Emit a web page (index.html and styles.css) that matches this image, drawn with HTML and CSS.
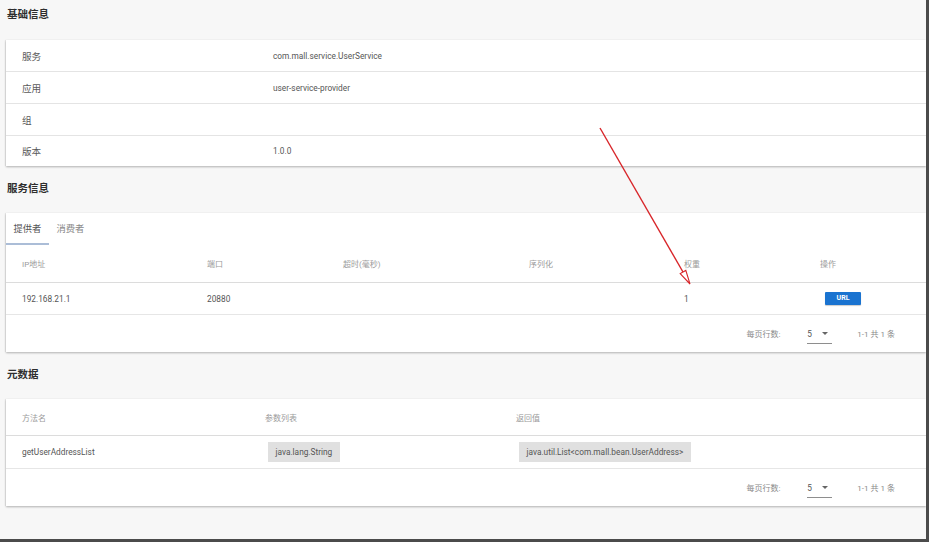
FILE: index.html
```html
<!DOCTYPE html>
<html lang="zh-CN">
<head>
<meta charset="utf-8">
<title>服务详情</title>
<link rel="stylesheet" href="styles.css">
</head>
<body>
<div class="frame">
  <h2 class="title">基础信息</h2>
  <div class="card">
    <div class="kv"><span class="k">服务</span><span class="v">com.mall.service.UserService</span></div>
    <div class="kv"><span class="k">应用</span><span class="v">user-service-provider</span></div>
    <div class="kv"><span class="k">组</span><span class="v"></span></div>
    <div class="kv"><span class="k">版本</span><span class="v">1.0.0</span></div>
  </div>

  <h2 class="title next">服务信息</h2>
  <div class="card">
    <div class="tabs">
      <span class="tab active">提供者</span>
      <span class="tab">消费者</span>
    </div>
    <div class="trow thead g6">
      <span>IP地址</span><span>端口</span><span>超时(毫秒)</span><span>序列化</span><span>权重</span><span>操作</span>
    </div>
    <div class="trow g6">
      <span>192.168.21.1</span><span>20880</span><span></span><span></span><span>1</span><span><span class="btn">URL</span></span>
    </div>
    <div class="pager">
      <span class="plabel">每页行数:</span>
      <span class="select">5<i class="caret"></i></span>
      <span class="pinfo">1-1 共 1 条</span>
    </div>
  </div>

  <h2 class="title next">元数据</h2>
  <div class="card">
    <div class="trow thead short g3">
      <span>方法名</span><span>参数列表</span><span>返回值</span>
    </div>
    <div class="trow tall g3">
      <span>getUserAddressList</span><span><span class="chip">java.lang.String</span></span><span><span class="chip">java.util.List&lt;com.mall.bean.UserAddress&gt;</span></span>
    </div>
    <div class="pager">
      <span class="plabel">每页行数:</span>
      <span class="select">5<i class="caret"></i></span>
      <span class="pinfo">1-1 共 1 条</span>
    </div>
  </div>

  <svg class="arrow" width="926" height="539" viewBox="0 0 926 539">
    <line x1="600" y1="128" x2="683" y2="272" stroke="#d8262a" stroke-width="1.4"/>
    <polygon points="690,284 680.2,273.6 685.8,270.4" fill="#fff" stroke="#d8262a" stroke-width="1.1" stroke-linejoin="miter"/>
  </svg>
</div>
</body>
</html>
```

FILE: styles.css
```css
html, body {
  margin: 0;
  padding: 0;
  background: #ffffff;
}

body {
  font-family: Roboto, "Noto Sans CJK SC", sans-serif;
  color: #555;
}

.frame {
  position: relative;
  width: 926px;
  height: 539px;
  background: #f7f7f7;
  border-right: 3px solid #4b4b4b;
  border-bottom: 3px solid #4b4b4b;
  overflow: hidden;
}

.title {
  margin: 0;
  padding: 8px 7px 18px;
  font-size: 10.5px;
  line-height: 14px;
  font-weight: bold;
  color: #2e2e2e;
}

.title.next {
  padding-top: 10px;
  padding-bottom: 17px;
}

.card {
  margin: 0 0 6px 6px;
  background: #fff;
  box-shadow: 0 1px 2px rgba(0, 0, 0, 0.28), -1px 0 1px rgba(0, 0, 0, 0.06);
}

.kv {
  display: grid;
  grid-template-columns: 251px 1fr;
  align-items: center;
  height: 31px;
  padding-left: 16px;
  border-bottom: 1px solid #e4e4e4;
}

.kv:last-child {
  border-bottom: none;
  height: 30px;
}

.k {
  font-size: 9.6px;
  color: #5a5a5a;
}

.v {
  font-size: 8.3px;
  color: #555;
}

.tabs {
  display: flex;
  height: 32px;
}

.tab {
  padding: 0 7.5px;
  line-height: 31px;
  font-size: 9.3px;
  color: #888;
  border-bottom: 2px solid transparent;
}

.tab.active {
  color: #555;
  border-bottom-color: #abbdd7;
}

.trow {
  display: grid;
  align-items: center;
  height: 31px;
  padding-left: 16px;
  font-size: 8.3px;
  color: #555;
  border-bottom: 1px solid #e6e6e6;
}

.g6 {
  grid-template-columns: 185px 136px 186px 155px 136px 1fr;
}

.g3 {
  grid-template-columns: 243px 251px 1fr;
}

.thead {
  height: 37px;
  font-size: 8px;
  color: #9b9b9b;
  border-bottom: 1px solid #dcdcdc;
}

.thead.short {
  height: 36px;
}

.trow.tall {
  height: 32px;
}

.btn {
  display: inline-block;
  margin-left: 5px;
  width: 36px;
  height: 13px;
  line-height: 13px;
  text-align: center;
  background: #1a73d0;
  color: #fff;
  font-size: 7px;
  font-weight: bold;
  border-radius: 1px;
  box-shadow: 0 1px 1px rgba(0, 0, 0, 0.2);
}

.chip {
  display: inline-block;
  margin-left: 3px;
  height: 20px;
  line-height: 20px;
  padding: 0 7.5px;
  background: #e0e0e0;
  color: #555;
}

.pager {
  display: flex;
  align-items: center;
  justify-content: flex-end;
  height: 37px;
  padding-right: 31px;
  font-size: 8px;
  color: #8a8a8a;
}

.select {
  display: inline-flex;
  align-items: center;
  width: 25px;
  height: 20px;
  margin: 0 25px 0 27px;
  box-sizing: border-box;
  border-bottom: 1px solid #8e8e8e;
  color: #555;
  font-size: 8.3px;
  padding-top: 1px;
}

.caret {
  display: inline-block;
  margin-left: 10px;
  width: 0;
  height: 0;
  border-left: 3px solid transparent;
  border-right: 3px solid transparent;
  border-top: 3px solid #666;
}

.arrow {
  position: absolute;
  left: 0;
  top: 0;
  pointer-events: none;
}
```
